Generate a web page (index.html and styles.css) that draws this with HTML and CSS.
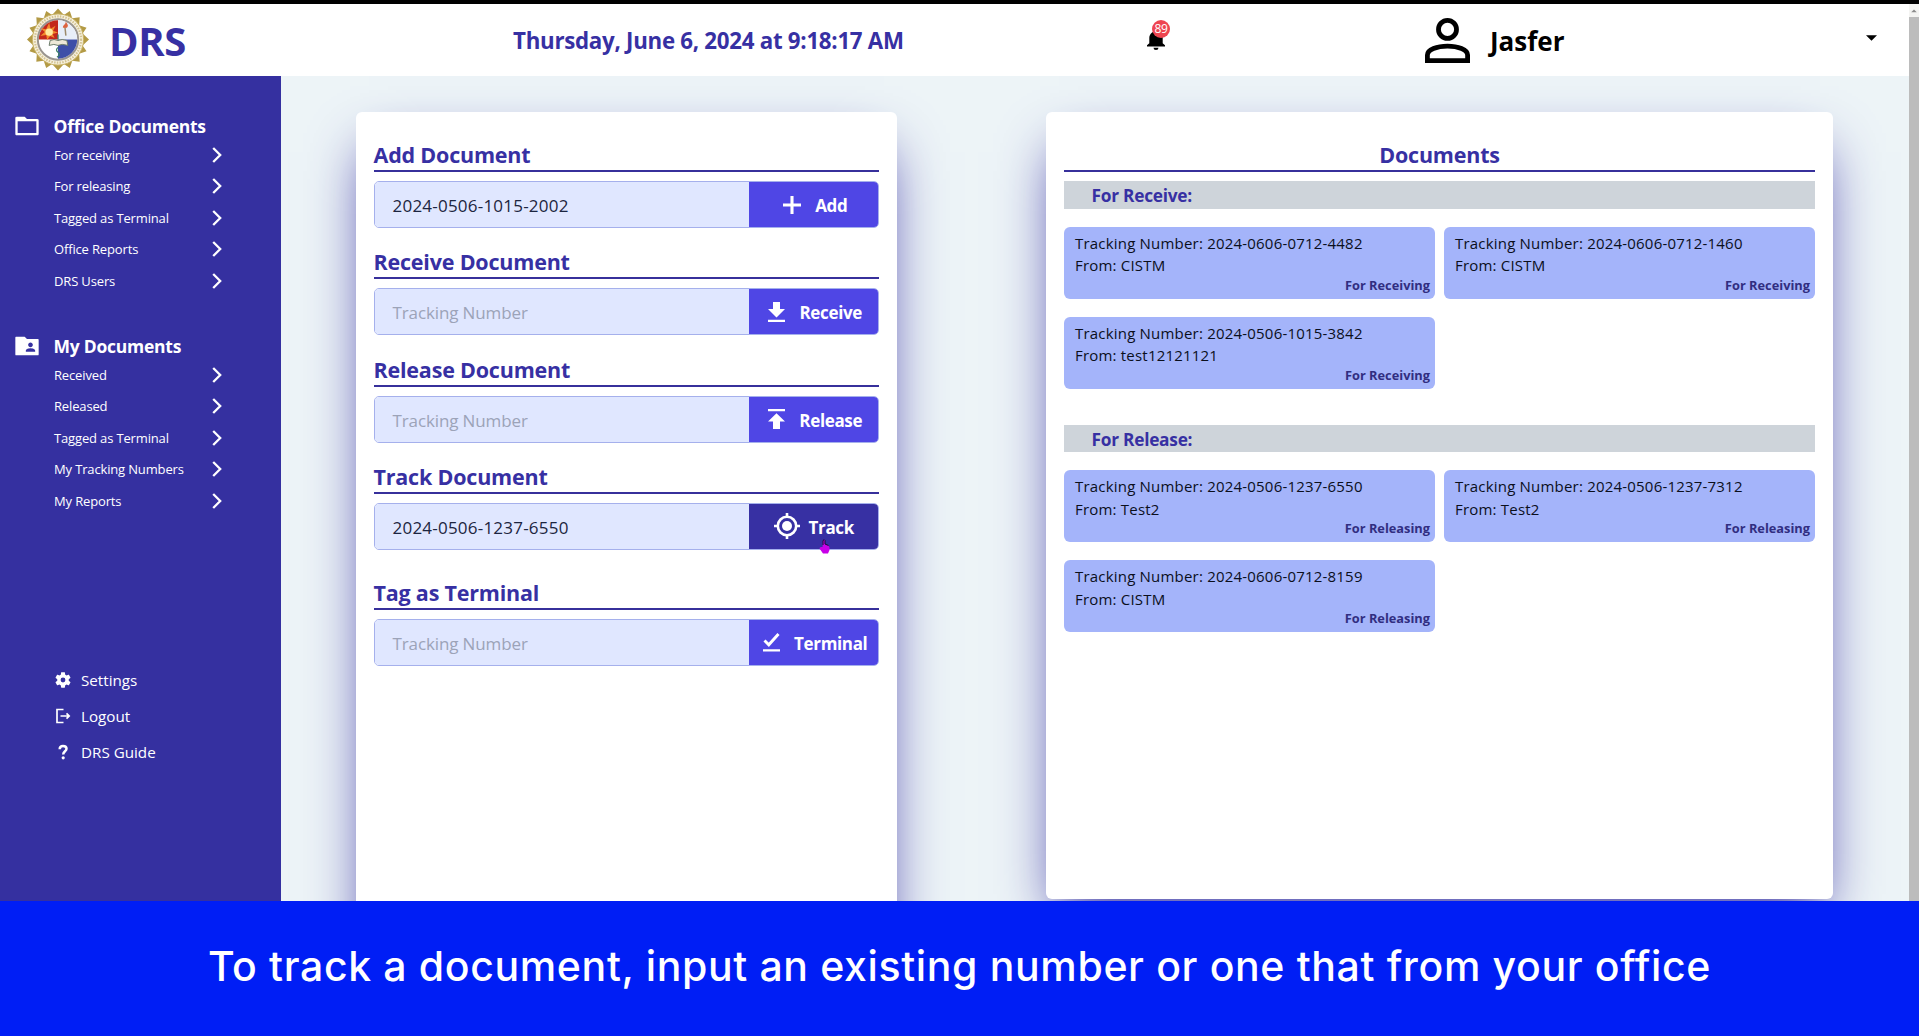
FILE: index.html
```html
<!DOCTYPE html>
<html lang="en">
<head>
<meta charset="utf-8">
<title>DRS</title>
<link rel="stylesheet" href="styles.css">
</head>
<body>
<svg class="defs" aria-hidden="true">
  <symbol id="chevron" viewBox="0 0 10 16"><path d="M1.2 1l7 7-7 7" fill="none" stroke="#fff" stroke-width="2.3"/></symbol>
</svg>
<div class="screen">
  <div class="app">
    <header class="topbar">
      <svg class="seal" viewBox="-32 -32 64 64">
        <polygon fill="#b39a45" points="0,-31.5 6,-25 12,-29 14.500,-21.500 22,-22.500 21.500,-14.500 29,-12 25,-6 31.500,0 25,6 29,12 21.500,14.500 22,22.500 14.500,21.500 12,29 6,25 0,31.500 -6,25 -12,29 -14.500,21.500 -22,22.500 -21.500,14.500 -29,12 -25,6 -31.500,0 -25,-6 -29,-12 -21.500,-14.500 -22,-22.500 -14.500,-21.500 -12,-29 -6,-25"/>
        <circle r="26" fill="#f6f0dc" stroke="#c9b366" stroke-width="1"/>
        <circle r="23.500" fill="none" stroke="#d3c393" stroke-width="2.200" stroke-dasharray="1.500 1.300"/>
        <circle r="20.500" fill="#fff" stroke="#9a958f" stroke-width="2"/>
        <path d="M0 0V-19.500A19.500 19.500 0 0 0-19.500 0z" fill="#c3271c"/>
        <path d="M0 0H19.500A19.500 19.500 0 0 0 0-19.500z" fill="#e8eef8"/>
        <path d="M0 0V19.500A19.500 19.500 0 0 0 19.500 0z" fill="#3e4fa8"/>
        <path d="M-9-17l1.500 6 5-3-2.500 5 5 2-5.500 1.500 2 4-4.500-2-3 4-1-5-6 1 4.500-4-4-4 5.500 1z" fill="#f28a2c"/>
        <circle cx="-9" cy="-7.500" r="3.800" fill="#ffe9a0"/>
        <path d="M8-4l-1-9" stroke="#9b8a6a" stroke-width="1.500"/><path d="M5-12c0-3 2-2 3-6 2 3 3 4 1 6z" fill="#dd6440"/>
        <path d="M-8 1q4-2 8 0 4-2 9 0l1 5q-6-2-10 0-4-2-9 0z" fill="#eee9d8" stroke="#6b7b69" stroke-width="1"/>
        <path d="M0 0v-5M0 8q-3 3 0 5t-1 5" stroke="#3d8068" stroke-width="1.300" fill="none"/>
      </svg>
      <div class="brand">DRS</div>
      <div class="clock">Thursday, June 6, 2024 at 9:18:17 AM</div>
      <div class="bell">
        <svg viewBox="0 0 18 20" width="18" height="20"><path d="M0 16.500v-1.200l2.300-2.100V8C2.300 4.500 4.500 2 7.500 1.400V0h3v1.400c3 .6 5.200 3.100 5.200 6.600v5.200l2.300 2.100v1.200zM6.500 17.800h5A2.500 2.200 0 0 1 6.500 17.800z"/></svg>
        <span class="badge">89</span>
      </div>
      <svg class="avatar" viewBox="0 0 45 45"><circle cx="22.500" cy="11.400" r="9" fill="none" stroke="#000" stroke-width="4.800"/><path d="M2.400 42.600V37C2.400 31.500 12 28.100 22.500 28.100S42.600 31.500 42.600 37v5.600z" fill="none" stroke="#000" stroke-width="4.800"/></svg>
      <div class="user">Jasfer</div>
      <svg class="caret" viewBox="0 0 12 6"><path d="M0 0h12L6 6z"/></svg>
    </header>
    <div class="body">
      <nav class="sidebar">
        <section class="menu">
          <h2><svg viewBox="0 0 24 24"><path d="M20 6h-8l-2-2H4c-1.100 0-2 .2-2 1v14c0 .8.9 1 2 1h16c1.100 0 2-.2 2-1V7c0-.8-.9-1-2-1zm0 12H4V8h16v10z"/></svg>Office Documents</h2>
          <a>For receiving<svg><use href="#chevron"/></svg></a>
          <a>For releasing<svg><use href="#chevron"/></svg></a>
          <a>Tagged as Terminal<svg><use href="#chevron"/></svg></a>
          <a>Office Reports<svg><use href="#chevron"/></svg></a>
          <a>DRS Users<svg><use href="#chevron"/></svg></a>
        </section>
        <section class="menu">
          <h2><svg viewBox="0 0 24 24"><path d="M21 6h-9l-2-2H3c-.8 0-1 .2-1 1v14c0 .8.2 1 1 1h18c.8 0 1-.2 1-1V7c0-.8-.2-1-1-1zm-6 3c1.100 0 2 .9 2 2s-.9 2-2 2-2-.9-2-2 .9-2 2-2zm4 8h-8v-1c0-1.330 2.670-2 4-2s4 .67 4 2v1z"/></svg>My Documents</h2>
          <a>Received<svg><use href="#chevron"/></svg></a>
          <a>Released<svg><use href="#chevron"/></svg></a>
          <a>Tagged as Terminal<svg><use href="#chevron"/></svg></a>
          <a>My Tracking Numbers<svg><use href="#chevron"/></svg></a>
          <a>My Reports<svg><use href="#chevron"/></svg></a>
        </section>
        <section class="tools">
          <a><svg viewBox="2 2 20 20"><path d="M19.140 12.940c.04-.3.060-.61.060-.94s-.02-.64-.07-.94l2.030-1.580c.18-.14.230-.41.120-.61l-1.920-3.320c-.12-.22-.37-.29-.59-.22l-2.390.96c-.5-.38-1.030-.7-1.620-.94L14.400 2.810c-.04-.24-.24-.41-.48-.41h-3.840c-.24 0-.43.17-.47.41L9.250 5.350c-.59.24-1.130.57-1.620.94l-2.390-.96c-.22-.08-.47 0-.59.22L2.740 8.870c-.12.21-.08.470.12.610l2.030 1.580c-.05.3-.09.630-.09.940s.02.640.07.940l-2.030 1.580c-.18.140-.23.410-.12.610l1.920 3.320c.12.220.37.290.59.220l2.390-.96c.5.380 1.030.7 1.620.940l.36 2.540c.05.240.24.410.48.410h3.840c.24 0 .44-.17.470-.41l.36-2.540c.59-.24 1.130-.56 1.620-.94l2.390.96c.22.080.47 0 .59-.22l1.920-3.320c.12-.22.070-.47-.12-.61zM12 15a3 3 0 1 1 0-6 3 3 0 0 1 0 6z"/></svg>Settings</a>
          <a><svg viewBox="0 0 16 16"><path d="M8.500 1.500H2v13h6.500M5.500 8h8M11.500 5.300L14.200 8l-2.700 2.700" fill="none" stroke="#fff" stroke-width="1.700"/></svg>Logout</a>
          <a><svg viewBox="0 0 16 16"><path d="M4.700 5.200C4.700 2.800 6.100 1.900 8 1.900s3.500 1 3.500 2.900C11.500 7.400 8.200 7.200 8.200 10.500" fill="none" stroke="#fff" stroke-width="2.500"/><circle cx="8.200" cy="13.800" r="1.600"/></svg>DRS Guide</a>
        </section>
      </nav>
      <main class="content">
        <section class="panel actions">
          <div class="field"><h3>Add Document</h3>
            <div class="row"><div class="input filled">2024-0506-1015-2002</div><button class="btn"><svg class="i-add" viewBox="0 0 18 18"><path d="M9 0v18M0 9h18" stroke="#fff" stroke-width="3.100"/></svg>Add</button></div></div>
          <div class="field"><h3>Receive Document</h3>
            <div class="row"><div class="input">Tracking Number</div><button class="btn"><svg class="i-recv" viewBox="0 0 17 20"><path d="M5 0h7v7H17l-8.500 8.500L0 7h5zM0 17.800h17V20H0z"/></svg>Receive</button></div></div>
          <div class="field"><h3>Release Document</h3>
            <div class="row"><div class="input">Tracking Number</div><button class="btn"><svg class="i-rel" viewBox="0 0 17 20"><path d="M0 0h17v2.300H0zM8.500 4.200L17 12.500h-5V20h-7v-7.500H0z"/></svg>Release</button></div></div>
          <div class="field"><h3>Track Document</h3>
            <div class="row"><div class="input filled">2024-0506-1237-6550</div><button class="btn hover"><svg class="i-track" viewBox="0 0 26 26"><circle cx="13" cy="13" r="9.200" fill="none" stroke="#fff" stroke-width="2.600"/><circle cx="13" cy="13" r="5"/><path d="M13 0v4M13 22v4M0 13h4M22 13h4" stroke="#fff" stroke-width="2.600"/></svg>Track
              <svg class="pointer" viewBox="0 0 11 15"><path d="M4 1.500q1.500-1.500 2 0V5l3.500 1.500Q11 8 10.500 11L9 14.500H4L.8 10Q0 7.500 3.500 8z" fill="#c800e8"/><path d="M4 6V1.500q1.500-1.500 2 0V5l3.500 1.500" fill="none" stroke="#1c0838" stroke-width="1"/></svg></button></div></div>
          <div class="field last"><h3>Tag as Terminal</h3>
            <div class="row"><div class="input">Tracking Number</div><button class="btn"><svg class="i-term" viewBox="0 0 17 19"><path d="M1.500 7.500l4.300 4.300L15.500 1" fill="none" stroke="#fff" stroke-width="2.900"/><path d="M0 16.200h17v2.300H0z"/></svg>Terminal</button></div></div>
        </section>
        <section class="panel documents">
          <h3>Documents</h3>
          <h4>For Receive:</h4>
          <div class="cards">
            <article><p>Tracking Number: 2024-0606-0712-4482</p><p>From: CISTM</p><b>For Receiving</b></article>
            <article><p>Tracking Number: 2024-0606-0712-1460</p><p>From: CISTM</p><b>For Receiving</b></article>
            <article><p>Tracking Number: 2024-0506-1015-3842</p><p>From: test12121121</p><b>For Receiving</b></article>
          </div>
          <h4>For Release:</h4>
          <div class="cards">
            <article><p>Tracking Number: 2024-0506-1237-6550</p><p>From: Test2</p><b>For Releasing</b></article>
            <article><p>Tracking Number: 2024-0506-1237-7312</p><p>From: Test2</p><b>For Releasing</b></article>
            <article><p>Tracking Number: 2024-0606-0712-8159</p><p>From: CISTM</p><b>For Releasing</b></article>
          </div>
        </section>
      </main>
    </div>
  </div>
  <div class="scrollbar"><svg viewBox="0 0 10 14"><path d="M2 9l3-3 3 3z" fill="#8a8a8a"/></svg><div class="thumb"></div></div>
</div>
<div class="caption">To track a document, input an existing number or one that from your office</div>
</body>
</html>
```
FILE: styles.css
```css
* { box-sizing: border-box; margin: 0; padding: 0; }
.defs { position: absolute; width: 0; height: 0; }
body {
  width: 1919px; height: 1036px; overflow: hidden;
  display: flex; flex-direction: column;
  border-top: 4px solid #000;
  font-family: "Open Sans", "Noto Sans", sans-serif;
  background: #fff;
}
.screen { height: 897px; display: flex; overflow: hidden; flex: none; }
.app { flex: 1; display: flex; flex-direction: column; }

.topbar { height: 72px; flex: none; display: flex; align-items: center; background: #fff; }
.seal { width: 64px; height: 63px; margin: -1px 0 0 26px; }
.brand { width: 402px; margin-left: 19px; padding-top: 2px; font-size: 40px; font-weight: 700; line-height: 48px; letter-spacing: -.4px; color: #3730a3; }
.clock { width: 633px; margin-left: 2px; padding-top: 1px; font-size: 22.300px; font-weight: 700; letter-spacing: -.28px; color: #3730a3; white-space: nowrap; }
.bell { position: relative; width: 18px; height: 20px; margin-left: 1px; }
.bell svg { display: block; }
.badge {
  position: absolute; left: 5px; top: -10px; width: 18px; height: 18px; border-radius: 50%;
  background: #ee4550; color: #fff; font-size: 12px; line-height: 18px; text-align: center; letter-spacing: -.3px;
}
.avatar { width: 45px; height: 45px; margin-left: 260px; }
.user { width: 376px; margin-left: 20px; padding-top: 2px; font-size: 26px; font-weight: 700; }
.caret { width: 11px; height: 6px; margin-top: -4px; }

.body { flex: 1; display: flex; min-height: 0; overflow: hidden; background: #edf4f7; }
.sidebar { position: relative; z-index: 1; width: 281px; flex: none; padding-top: 37px; background: #3530a0; color: #fff; fill: #fff; }
.menu { margin-bottom: 36.500px; }
.menu h2 { height: 26px; display: flex; align-items: center; font-size: 17.500px; font-weight: 700; line-height: 24px; letter-spacing: -.25px; }
.menu h2 svg { width: 28px; height: 28px; margin: 0 12.500px 0 13px; flex: none; }
.menu a { width: 222px; height: 31.500px; margin-left: 54px; display: flex; align-items: center; justify-content: space-between; padding-right: 54px; font-size: 13px; letter-spacing: -.15px; }
.menu a svg { width: 10px; height: 16px; flex: none; }
.tools { margin-top: 145px; }
.tools a { height: 36px; margin-left: 55px; display: flex; align-items: center; gap: 10px; font-size: 15.200px; }
.tools svg { width: 16px; height: 16px; }

.content { flex: 1; display: flex; align-items: flex-start; padding: 36px 0 0 74.500px; }
.panel { flex: none; padding: 28px 18px 0; border-radius: 6px; background: #fff; box-shadow: 0 27px 54px -13px #3730a3; }
.actions { width: 541.500px; height: 900px; }
.documents { width: 787px; height: 787px; margin-left: 149px; }
.panel h3 { height: 32px; border-bottom: 2px solid #37309b; font-size: 21.500px; font-weight: 700; line-height: 29px; letter-spacing: -.2px; color: #3730a3; }

.field { margin-bottom: 19.300px; }
.field.last { margin-top: 28.500px; }
.row { height: 47px; margin-top: 9px; display: flex; border: 1px solid #a5b0ec; border-radius: 5px; overflow: hidden; }
.input { flex: 1; padding-left: 18px; background: #e0e7ff; font-size: 17px; line-height: 48px; letter-spacing: -.12px; color: #9ca3b8; height: 45px; }
.input.filled { color: #1c2540; letter-spacing: .22px; }
.btn { position: relative; width: 129.500px; border: 0; padding: 3px 0 0 4px; display: flex; align-items: center; justify-content: center; background: #4f46e5; color: #fff; fill: #fff; font: 700 17px/42px "Open Sans", sans-serif; letter-spacing: -.35px; }
.btn.hover { padding-left: 1px; background: #3730a3; }
.row:has(.hover) { overflow: visible; }
.row:has(.hover) .input { border-radius: 4px 0 0 4px; }
.row:has(.hover) .btn { border-radius: 0 4px 4px 0; }
.btn svg { margin-top: -3px; }
.i-add { width: 18px; height: 18px; margin-right: 14px; }
.i-recv, .i-rel { width: 17px; height: 20px; margin-right: 14px; }
.i-track { width: 26px; height: 26px; margin-right: 9px; }
.i-term { width: 17px; height: 19px; margin-right: 14px; }
.btn .pointer { position: absolute; left: 70px; top: 35px; width: 11px; height: 15px; margin: 0; }

.documents h3 { text-align: center; }
.documents h4 { height: 27.500px; margin-top: 9px; padding: 1px 0 0 27.500px; background: #ced4da; color: #3730a3; font-size: 17.300px; font-weight: 700; line-height: 28px; letter-spacing: -.25px; }
.cards { display: grid; grid-template-columns: 1fr 1fr; gap: 18px 9px; margin-top: 18px; }
.cards + h4 { margin-top: 36px; }
article { height: 72px; padding: 5px 5px 0 11px; border-radius: 6px; background: #a4b4fa; color: #0b0f1c; }
article p { font-size: 15px; line-height: 22.500px; letter-spacing: .2px; }
article b { display: block; margin-top: -1px; text-align: right; font-size: 12.800px; font-weight: 700; line-height: 18px; color: #312e81; }

.scrollbar { width: 10px; display: flex; flex-direction: column; background: #f4f4f2; }
.scrollbar svg { width: 10px; height: 13px; }
.thumb { flex: 1; background: #bcbcbc; }

.caption { flex: 1; background: #001ef5; color: #fff; text-align: center; font: 500 41px/130px Inter, sans-serif; letter-spacing: .64px; white-space: nowrap; }
```
